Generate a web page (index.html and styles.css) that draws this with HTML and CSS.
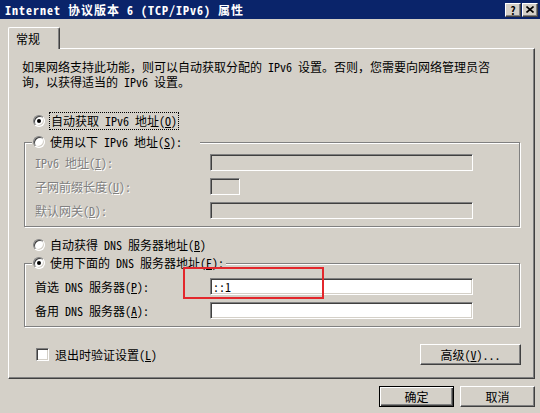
FILE: index.html
```html
<!DOCTYPE html>
<html lang="zh-CN">
<head>
<meta charset="utf-8">
<title>Internet 协议版本 6 (TCP/IPv6) 属性</title>
<link rel="stylesheet" href="styles.css">
</head>
<body>
<div class="window">
  <div class="titlebar">
    <span class="title">Internet 协议版本 6 (TCP/IPv6) 属性</span>
    <div class="tb-buttons">
      <span class="tb-btn help">?</span>
      <span class="tb-btn close"><svg width="8" height="7" viewBox="0 0 8 7"><path d="M0.5 0.5 L7.5 6.5 M7.5 0.5 L0.5 6.5" stroke="#000" stroke-width="1.6" fill="none"/></svg></span>
    </div>
  </div>
  <div class="content">
    <div class="tabs"><div class="tab">常规</div></div>
    <div class="panel">
      <p class="intro">如果网络支持此功能，则可以自动获取分配的 IPv6 设置。否则，您需要向网络管理员咨<br>询，以获得适当的 IPv6 设置。</p>

      <div class="option first"><span class="radio checked"></span><span class="focus">自动获取 IPv6 地址(<u>O</u>)</span></div>
      <fieldset class="group">
        <legend class="option legend wide"><span class="radio"></span><span>使用以下 IPv6 地址(<u>S</u>):</span></legend>
        <div class="fields tight">
          <span class="label disabled">IPv6 地址(<u>I</u>):</span><span class="edit off"></span>
          <span class="label disabled">子网前缀长度(<u>U</u>):</span><span class="edit off short"></span>
          <span class="label disabled">默认网关(<u>D</u>):</span><span class="edit off"></span>
        </div>
      </fieldset>

      <div class="option dns"><span class="radio"></span><span>自动获得 DNS 服务器地址(<u>B</u>)</span></div>
      <fieldset class="group second">
        <legend class="option legend"><span class="radio checked"></span><span>使用下面的 DNS 服务器地址(<u>E</u>):</span></legend>
        <div class="fields loose">
          <span class="label">首选 DNS 服务器(<u>P</u>):</span><span class="edit">::1</span>
          <span class="label">备用 DNS 服务器(<u>A</u>):</span><span class="edit"></span>
        </div>
      </fieldset>

      <div class="bottom-row">
        <div class="check-row"><span class="checkbox"></span><span>退出时验证设置(<u>L</u>)</span></div>
        <span class="button advanced">高级(<u>V</u>)...</span>
      </div>
    </div>
    <div class="actions">
      <span class="button default">确定</span>
      <span class="button">取消</span>
    </div>
  </div>
  <div class="annotation"></div>
</div>
</body>
</html>
```
FILE: styles.css
```css
* { box-sizing: border-box; }
html, body { margin: 0; padding: 0; }
body {
  background: #D4D0C8;
  font-family: "Noto Sans Mono CJK SC", "Noto Sans CJK SC", sans-serif;
  font-size: 12px;
  color: #000;
}
.window {
  position: relative;
  width: 540px;
  height: 413px;
  overflow: hidden;
  background: #D4D0C8;
}
.titlebar {
  height: 19px;
  background: #0A246A;
  display: flex;
  align-items: center;
  justify-content: space-between;
  padding: 0 2px 0 5px;
}
.title {
  color: #fff;
  font-weight: bold;
  letter-spacing: 1px;
  line-height: 19px;
  white-space: nowrap;
}
.tb-buttons { display: flex; gap: 1px; }
.tb-btn {
  width: 16px;
  height: 14px;
  background: #D4D0C8;
  border: 1px solid;
  border-color: #fff #404040 #404040 #fff;
  box-shadow: inset -1px -1px 0 #808080;
  display: flex;
  align-items: center;
  justify-content: center;
  font-weight: bold;
  font-size: 11px;
  line-height: 12px;
}
.content { padding: 8px 5px 0 8px; }
.tabs { height: 21px; display: flex; }
.tab {
  position: relative;
  z-index: 1;
  width: 52px;
  height: 22px;
  background: #D4D0C8;
  border-top: 1px solid #fff;
  border-left: 1px solid #fff;
  border-right: 1px solid #404040;
  border-radius: 2px 2px 0 0;
  box-shadow: inset -1px 0 0 #808080;
  padding: 4px 0 0 7px;
  line-height: 14px;
}
.panel {
  width: 527px;
  height: 331px;
  border: 1px solid;
  border-color: #fff #404040 #404040 #fff;
  box-shadow: inset -1px -1px 0 #808080;
  padding: 0 0 0 13px;
}
.intro {
  margin: 10px 0 0;
  line-height: 15px;
  white-space: nowrap;
}
.option {
  display: flex;
  align-items: center;
  gap: 5px;
  height: 16px;
  line-height: 16px;
  white-space: nowrap;
}
.option.first { margin: 24px 0 0 11px; }
.option.dns { margin: 10px 0 0 11px; }
.focus { outline: 1px dotted #000; outline-offset: 0; padding: 0 1px; }
.radio {
  width: 12px;
  height: 12px;
  flex: none;
  border-radius: 50%;
  background: #fff;
  border: 1px solid;
  border-color: #808080 #fff #fff #808080;
  box-shadow: inset 1px 1px 0 #404040, inset -1px -1px 0 #D4D0C8;
  display: flex;
  align-items: center;
  justify-content: center;
}
.radio.checked::after {
  content: "";
  width: 4px;
  height: 4px;
  border-radius: 50%;
  background: #000;
}
.group {
  margin: 5px 0 0 2px;
  width: 496px;
  padding: 0 0 7px;
  border: 1px solid #808080;
  box-shadow: inset 1px 1px 0 #fff, 1px 1px 0 #fff;
  min-inline-size: 0;
}
.group.second { margin-top: 2px; }
.legend {
  margin-left: 7px;
  padding: 0 2px 0 1px;
  background: #D4D0C8;
}
.legend.wide { padding-right: 18px; }
.fields {
  display: grid;
  grid-template-columns: 175px 263px;
  row-gap: 7px;
  padding-left: 10px;
}
.fields.tight { padding-top: 4px; }
.fields.loose { padding-top: 7px; }
.label {
  line-height: 17px;
  height: 17px;
  white-space: nowrap;
}
.label.disabled {
  color: #808080;
  text-shadow: 1px 1px 0 #fff;
}
.edit {
  height: 17px;
  background: #fff;
  border: 1px solid;
  border-color: #808080 #fff #fff #808080;
  box-shadow: inset 1px 1px 0 #404040, inset -1px -1px 0 #D4D0C8;
  padding: 0 0 0 2px;
  line-height: 15px;
  white-space: nowrap;
}
.edit.off { background: #D4D0C8; }
.edit.short { width: 30px; }
.bottom-row {
  margin: 17px 13px 0 14px;
  display: flex;
  justify-content: space-between;
  align-items: flex-start;
}
.check-row {
  display: flex;
  align-items: center;
  gap: 6px;
  height: 17px;
  margin-top: 2px;
  line-height: 17px;
}
.checkbox {
  width: 13px;
  height: 13px;
  background: #fff;
  border: 1px solid;
  border-color: #808080 #fff #fff #808080;
  box-shadow: inset 1px 1px 0 #404040, inset -1px -1px 0 #D4D0C8;
}
.button {
  width: 75px;
  height: 21px;
  display: flex;
  align-items: center;
  justify-content: center;
  background: #D4D0C8;
  border: 1px solid;
  border-color: #fff #404040 #404040 #fff;
  box-shadow: inset -1px -1px 0 #808080;
  line-height: 17px;
  white-space: nowrap;
}
.button.advanced { width: 101px; }
.button.default {
  border: 1px solid #000;
  box-shadow: inset 1px 1px 0 #fff, inset -1px -1px 0 #404040, inset -2px -2px 0 #808080;
}
.actions {
  margin-top: 7px;
  display: flex;
  justify-content: flex-end;
  gap: 6px;
}
.annotation {
  position: absolute;
  left: 183px;
  top: 267px;
  width: 141px;
  height: 32px;
  border: 2px solid #E3272C;
}
```
